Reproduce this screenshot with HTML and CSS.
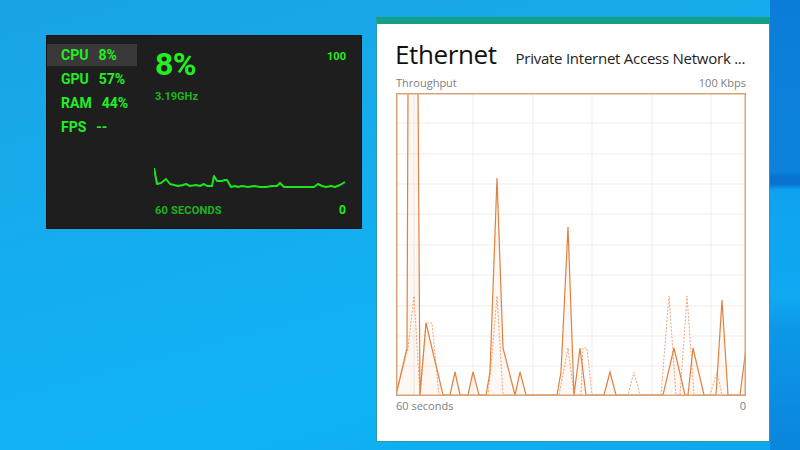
FILE: index.html
```html
<!DOCTYPE html>
<html lang="en">
<head>
    <meta charset="UTF-8">
    <meta name="viewport" content="width=device-width, initial-scale=1.0">
    <title>Performance</title>
    <link rel="stylesheet" href="styles.css">
</head>
<body>
    <div class="desktop">
        <!-- game bar performance widget -->
        <div class="perf">
            <ul class="perf-list">
                <li class="active"><span class="key">CPU</span><span class="val">8%</span></li>
                <li><span class="key">GPU</span><span class="val">57%</span></li>
                <li><span class="key">RAM</span><span class="val">44%</span></li>
                <li><span class="key">FPS</span><span class="val">--</span></li>
            </ul>
            <div class="perf-main">
                <div class="perf-top">
                    <span class="big">8%</span>
                    <span class="max">100</span>
                </div>
                <div class="clock">3.19GHz</div>
                <svg class="spark" width="192" height="30" viewBox="154 162 192 30">
                    <polyline fill="none" stroke="#1ee41e" stroke-width="2" stroke-linejoin="round"
                        points="154,168 157,184 161,183 166,179 170,184 174,185 178,186 183,185 186,184 190,186 196,185 200,186 204,184 207,186 212,186 214,176 217,181 222,181 225,180 227,180 231,187 235,186 238,187 242,186 248,187 254,186 260,187 266,187 272,186 277,186 280,183 284,187 290,187 296,187 302,187 308,187 314,187 318,184 322,186 326,187 331,186 335,187 340,185 345,182"/>
                </svg>
                <div class="perf-bottom">
                    <span class="secs">60 SECONDS</span>
                    <span class="zero">0</span>
                </div>
            </div>
        </div>

        <!-- task manager ethernet panel -->
        <div class="panel">
            <div class="panel-head">
                <h1>Ethernet</h1>
                <span class="adapter">Private Internet Access Network ...</span>
            </div>
            <div class="axis">
                <span>Throughput</span>
                <span>100 Kbps</span>
            </div>
            <svg class="chart" width="350" height="303" viewBox="0 0 350 303">
                <g stroke="#f1ebe5" stroke-width="1">
                    <line x1="18" y1="0" x2="18" y2="303"/>
                    <line x1="77" y1="0" x2="77" y2="303"/>
                    <line x1="137" y1="0" x2="137" y2="303"/>
                    <line x1="196" y1="0" x2="196" y2="303"/>
                    <line x1="256" y1="0" x2="256" y2="303"/>
                    <line x1="315" y1="0" x2="315" y2="303"/>
                    <line x1="0" y1="30" x2="350" y2="30"/>
                    <line x1="0" y1="61" x2="350" y2="61"/>
                    <line x1="0" y1="91" x2="350" y2="91"/>
                    <line x1="0" y1="121" x2="350" y2="121"/>
                    <line x1="0" y1="152" x2="350" y2="152"/>
                    <line x1="0" y1="182" x2="350" y2="182"/>
                    <line x1="0" y1="213" x2="350" y2="213"/>
                    <line x1="0" y1="243" x2="350" y2="243"/>
                    <line x1="0" y1="273" x2="350" y2="273"/>
                </g>
                <polyline fill="none" stroke="#eda57c" stroke-width="1" stroke-dasharray="2 1.5"
                    points="0,302 12,255 18,203 24,302 30,230 36,230 43,302 92,302 96,262 101,203 107,302 163,302 172,255 178,302 185,302 187,255 191,255 196,302 232,302 238,279 244,302 265,302 273,203 280,302 284,302 291,203 298,302 314,302 321,279 326,302 350,302"/>
                <polyline fill="rgba(240,160,100,0.07)" stroke="#e0813f" stroke-width="1.2" stroke-linejoin="miter"
                    points="0,302 11,255 12,-5 22,-5 24,302 30,230 47,302 54,302 59,279 64,302 72,302 77,279 83,302 90,302 94,279 101,85 107,255 119,302 124,279 130,302 161,302 165,279 172,134 178,302 184,255 190,302 208,302 214,279 220,302 267,302 278,255 289,302 292,302 297,255 308,302 320,302 326,207 332,302 344,302 350,255 350,303"/>
                <rect x="0.75" y="0.75" width="348.5" height="301.5" fill="none" stroke="#d7a47a" stroke-width="1.5"/>
            </svg>
            <div class="axis axis-bottom">
                <span>60 seconds</span>
                <span>0</span>
            </div>
        </div>
    </div>
</body>
</html>
```

FILE: styles.css
```css
body {
    margin: 0;
    width: 800px;
    height: 450px;
    overflow: hidden;
    background:
        linear-gradient(to bottom, #0b7dd8 0, #0c82db 172px, #0872cf 177px, #0872cf 184px, #0fa3ef 190px, #10a9f2 298px, #0d98e8 326px, #0a86dc 450px) right top / 30px 100% no-repeat,
        linear-gradient(165deg, #1aa3e5 0%, #15adee 40%, #0fb3f5 75%, #0ea6ef 100%);
}

.desktop {
    display: flex;
    align-items: flex-start;
    gap: 14px;
    padding: 17px 0 0 46px;
}

/* widget */

.perf {
    display: flex;
    width: 316px;
    height: 194px;
    margin-top: 18px;
    box-sizing: border-box;
    background-color: #1e1e1e;
    border: 1px solid #141414;
    font-family: Roboto, "DejaVu Sans", sans-serif;
    font-weight: 700;
    color: #22ee22;
}

.perf-list {
    list-style: none;
    width: 90px;
    margin: 0;
    padding: 8px 0 0;
}

.perf-list li {
    height: 22px;
    margin-bottom: 2px;
    padding-left: 14px;
    font-size: 14px;
    line-height: 22px;
}

.perf-list li.active {
    background-color: #393939;
}

.perf-list .val {
    margin-left: 10px;
}

.perf-main {
    flex: 1;
    padding: 12px 15px 0 18px;
}

.perf-top {
    display: flex;
    justify-content: space-between;
    align-items: flex-start;
}

.big {
    font-size: 32px;
    line-height: 32px;
    letter-spacing: -0.5px;
}

.max {
    margin-top: 2px;
    font-size: 11px;
    line-height: 14px;
}

.clock {
    margin-top: 10px;
    font-size: 11px;
    line-height: 14px;
    color: #1cb61c;
}

.spark {
    display: block;
    margin-left: -1px;
    margin-top: 58px;
}

.perf-bottom {
    display: flex;
    justify-content: space-between;
    align-items: flex-end;
    margin-top: 10px;
}

.secs {
    font-size: 11px;
    line-height: 14px;
    letter-spacing: 0.2px;
    color: #1cb61c;
}

.zero {
    font-size: 12px;
    line-height: 16px;
}

/* ethernet panel */

.panel {
    width: 394px;
    height: 425px;
    box-sizing: border-box;
    padding: 15px 23px 0 19px;
    background-color: #fff;
    border: 1px solid #2c9f95;
    border-top: 7px solid #15a086;
    font-family: "Open Sans", "Noto Sans", sans-serif;
}

.panel-head {
    display: flex;
    align-items: baseline;
    gap: 19px;
    white-space: nowrap;
}

.panel-head h1 {
    margin: 0 0 0 -1px;
    font-size: 26px;
    font-weight: 400;
    line-height: 31px;
    letter-spacing: -0.4px;
    color: #111;
}

.adapter {
    font-size: 15px;
    letter-spacing: -0.25px;
    color: #222;
}

.axis {
    display: flex;
    justify-content: space-between;
    margin-top: 5px;
    font-size: 11px;
    line-height: 15px;
    color: #808080;
}

.axis-bottom {
    margin-top: 2px;
}

.chart {
    display: block;
    margin-top: 3px;
}
```
